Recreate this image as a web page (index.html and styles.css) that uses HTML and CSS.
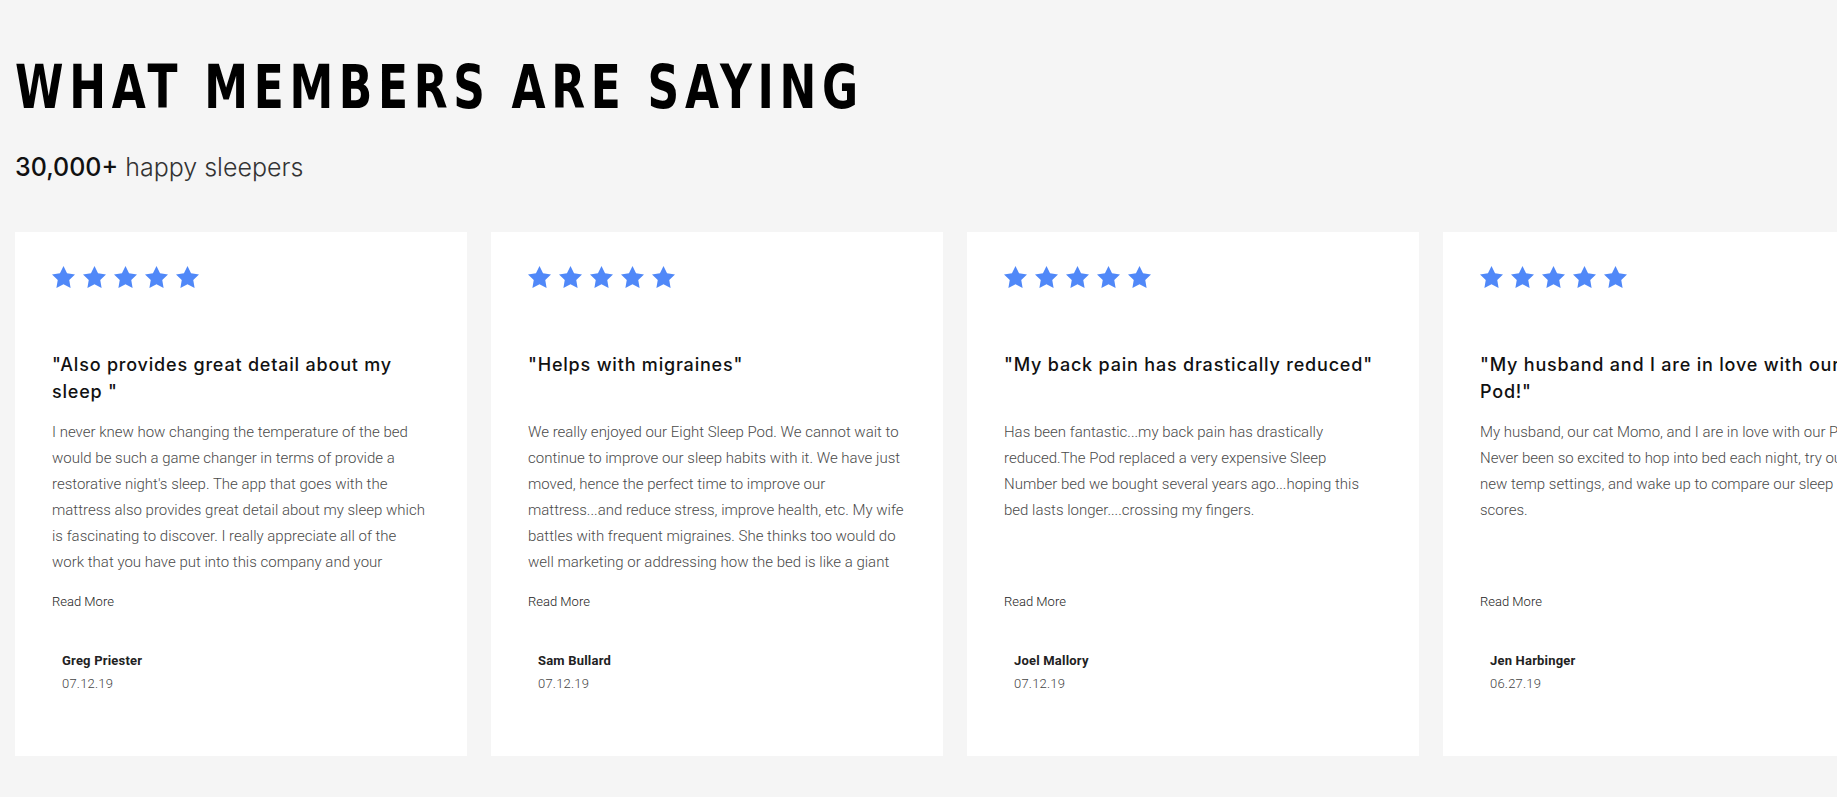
FILE: index.html
```html
<!DOCTYPE html>
<html lang="en">
<head>
<meta charset="utf-8">
<title>What members are saying</title>
<link rel="stylesheet" href="styles.css">
</head>
<body>
<section class="reviews">
  <h1 class="reviews-title">WHAT MEMBERS ARE SAYING</h1>
  <p class="reviews-sub"><strong>30,000+</strong> happy sleepers</p>
  <div class="cards">
    <article class="card">
      <div class="stars" aria-label="5 stars">
        <svg viewBox="2 1.5 20 19.02"><path d="M12 1.5l3.09 6.26 6.91 1.01-5 4.87 1.18 6.88L12 17.27l-6.18 3.25L7 13.64 2 8.77l6.91-1.01z"/></svg>
        <svg viewBox="2 1.5 20 19.02"><path d="M12 1.5l3.09 6.26 6.91 1.01-5 4.87 1.18 6.88L12 17.27l-6.18 3.25L7 13.64 2 8.77l6.91-1.01z"/></svg>
        <svg viewBox="2 1.5 20 19.02"><path d="M12 1.5l3.09 6.26 6.91 1.01-5 4.87 1.18 6.88L12 17.27l-6.18 3.25L7 13.64 2 8.77l6.91-1.01z"/></svg>
        <svg viewBox="2 1.5 20 19.02"><path d="M12 1.5l3.09 6.26 6.91 1.01-5 4.87 1.18 6.88L12 17.27l-6.18 3.25L7 13.64 2 8.77l6.91-1.01z"/></svg>
        <svg viewBox="2 1.5 20 19.02"><path d="M12 1.5l3.09 6.26 6.91 1.01-5 4.87 1.18 6.88L12 17.27l-6.18 3.25L7 13.64 2 8.77l6.91-1.01z"/></svg>
      </div>
      <h2 class="card-title">"Also provides great detail about my sleep "</h2>
      <p class="card-text">I never knew how changing the temperature of the bed would be such a game changer in terms of provide a restorative night's sleep. The app that goes with the mattress also provides great detail about my sleep which is fascinating to discover. I really appreciate all of the work that you have put into this company and your product.</p>
      <a class="read-more" href="#">Read More</a>
      <div class="author">
        <div class="author-name">Greg Priester</div>
        <div class="author-date">07.12.19</div>
      </div>
    </article>
    <article class="card">
      <div class="stars" aria-label="5 stars">
        <svg viewBox="2 1.5 20 19.02"><path d="M12 1.5l3.09 6.26 6.91 1.01-5 4.87 1.18 6.88L12 17.27l-6.18 3.25L7 13.64 2 8.77l6.91-1.01z"/></svg>
        <svg viewBox="2 1.5 20 19.02"><path d="M12 1.5l3.09 6.26 6.91 1.01-5 4.87 1.18 6.88L12 17.27l-6.18 3.25L7 13.64 2 8.77l6.91-1.01z"/></svg>
        <svg viewBox="2 1.5 20 19.02"><path d="M12 1.5l3.09 6.26 6.91 1.01-5 4.87 1.18 6.88L12 17.27l-6.18 3.25L7 13.64 2 8.77l6.91-1.01z"/></svg>
        <svg viewBox="2 1.5 20 19.02"><path d="M12 1.5l3.09 6.26 6.91 1.01-5 4.87 1.18 6.88L12 17.27l-6.18 3.25L7 13.64 2 8.77l6.91-1.01z"/></svg>
        <svg viewBox="2 1.5 20 19.02"><path d="M12 1.5l3.09 6.26 6.91 1.01-5 4.87 1.18 6.88L12 17.27l-6.18 3.25L7 13.64 2 8.77l6.91-1.01z"/></svg>
      </div>
      <h2 class="card-title">"Helps with migraines"</h2>
      <p class="card-text">We really enjoyed our Eight Sleep Pod. We cannot wait to continue to improve our sleep habits with it. We have just moved, hence the perfect time to improve our mattress...and reduce stress, improve health, etc. My wife battles with frequent migraines. She thinks too would do well marketing or addressing how the bed is like a giant heating pad for when she has a headache.</p>
      <a class="read-more" href="#">Read More</a>
      <div class="author">
        <div class="author-name">Sam Bullard</div>
        <div class="author-date">07.12.19</div>
      </div>
    </article>
    <article class="card">
      <div class="stars" aria-label="5 stars">
        <svg viewBox="2 1.5 20 19.02"><path d="M12 1.5l3.09 6.26 6.91 1.01-5 4.87 1.18 6.88L12 17.27l-6.18 3.25L7 13.64 2 8.77l6.91-1.01z"/></svg>
        <svg viewBox="2 1.5 20 19.02"><path d="M12 1.5l3.09 6.26 6.91 1.01-5 4.87 1.18 6.88L12 17.27l-6.18 3.25L7 13.64 2 8.77l6.91-1.01z"/></svg>
        <svg viewBox="2 1.5 20 19.02"><path d="M12 1.5l3.09 6.26 6.91 1.01-5 4.87 1.18 6.88L12 17.27l-6.18 3.25L7 13.64 2 8.77l6.91-1.01z"/></svg>
        <svg viewBox="2 1.5 20 19.02"><path d="M12 1.5l3.09 6.26 6.91 1.01-5 4.87 1.18 6.88L12 17.27l-6.18 3.25L7 13.64 2 8.77l6.91-1.01z"/></svg>
        <svg viewBox="2 1.5 20 19.02"><path d="M12 1.5l3.09 6.26 6.91 1.01-5 4.87 1.18 6.88L12 17.27l-6.18 3.25L7 13.64 2 8.77l6.91-1.01z"/></svg>
      </div>
      <h2 class="card-title">"My back pain has drastically reduced"</h2>
      <p class="card-text">Has been fantastic...my back pain has drastically reduced.The Pod replaced a very expensive Sleep Number bed we bought several years ago...hoping this bed lasts longer....crossing my fingers.</p>
      <a class="read-more" href="#">Read More</a>
      <div class="author">
        <div class="author-name">Joel Mallory</div>
        <div class="author-date">07.12.19</div>
      </div>
    </article>
    <article class="card">
      <div class="stars" aria-label="5 stars">
        <svg viewBox="2 1.5 20 19.02"><path d="M12 1.5l3.09 6.26 6.91 1.01-5 4.87 1.18 6.88L12 17.27l-6.18 3.25L7 13.64 2 8.77l6.91-1.01z"/></svg>
        <svg viewBox="2 1.5 20 19.02"><path d="M12 1.5l3.09 6.26 6.91 1.01-5 4.87 1.18 6.88L12 17.27l-6.18 3.25L7 13.64 2 8.77l6.91-1.01z"/></svg>
        <svg viewBox="2 1.5 20 19.02"><path d="M12 1.5l3.09 6.26 6.91 1.01-5 4.87 1.18 6.88L12 17.27l-6.18 3.25L7 13.64 2 8.77l6.91-1.01z"/></svg>
        <svg viewBox="2 1.5 20 19.02"><path d="M12 1.5l3.09 6.26 6.91 1.01-5 4.87 1.18 6.88L12 17.27l-6.18 3.25L7 13.64 2 8.77l6.91-1.01z"/></svg>
        <svg viewBox="2 1.5 20 19.02"><path d="M12 1.5l3.09 6.26 6.91 1.01-5 4.87 1.18 6.88L12 17.27l-6.18 3.25L7 13.64 2 8.77l6.91-1.01z"/></svg>
      </div>
      <h2 class="card-title">"My husband and I are in love with our Pod!"</h2>
      <p class="card-text">My husband, our cat Momo, and I are in love with our Pod! Never been so excited to hop into bed each night, try out new temp settings, and wake up to compare our sleep scores.</p>
      <a class="read-more" href="#">Read More</a>
      <div class="author">
        <div class="author-name">Jen Harbinger</div>
        <div class="author-date">06.27.19</div>
      </div>
    </article>
  </div>
</section>
</body>
</html>
```

FILE: styles.css
```css
html, body {
  margin: 0;
  padding: 0;
  background: #f5f5f5;
}

body {
  overflow: hidden;
  font-family: Roboto, "Liberation Sans", sans-serif;
  color: #111;
}

.reviews {
  padding: 57px 0 0 15px;
}

.reviews-title {
  margin: 0;
  font-family: "DejaVu Sans Condensed", "DejaVu Sans", sans-serif;
  font-stretch: condensed;
  font-weight: 700;
  font-size: 60px;
  line-height: 60px;
  letter-spacing: 7px;
  color: #000;
  white-space: nowrap;
  transform: scaleX(0.814);
  transform-origin: 0 50%;
}

.reviews-sub {
  margin: 35px 0 0;
  font-family: Inter, Roboto, sans-serif;
  font-size: 25px;
  line-height: 30px;
  font-weight: 300;
  color: #333;
}

.reviews-sub strong {
  font-weight: 500;
  color: #111;
}

.cards {
  display: flex;
  gap: 24px;
  margin-top: 50px;
}

.card {
  flex: 0 0 452px;
  width: 452px;
  min-width: 0;
  box-sizing: border-box;
  background: #fff;
  padding: 34px 25px 63px 37px;
  display: flex;
  flex-direction: column;
  align-items: flex-start;
}

.stars {
  display: flex;
  gap: 8px;
}

.stars svg {
  width: 23px;
  height: 22px;
  fill: #5088f8;
}

.card-title {
  margin: 63px 0 0;
  width: 380px;
  height: 54px;
  font-family: Inter, "Noto Sans", sans-serif;
  font-weight: 500;
  font-size: 18px;
  line-height: 27px;
  letter-spacing: 0.8px;
  color: #111;
}

.card-text {
  margin: 14px 0 0;
  width: 379px;
  height: 156px;
  overflow: hidden;
  font-size: 15px;
  line-height: 26px;
  font-weight: 300;
  color: #4a4a4a;
}

.read-more {
  margin-top: 18px;
  font-size: 13px;
  line-height: 18px;
  font-weight: 300;
  color: #222;
  text-decoration: none;
}

.author {
  margin-top: 41px;
  padding-left: 10px;
}

.author-name {
  font-size: 13px;
  line-height: 18px;
  font-weight: 700;
  color: #222;
  letter-spacing: 0.2px;
}

.author-date {
  margin-top: 5px;
  font-size: 13px;
  line-height: 18px;
  font-weight: 300;
  color: #444;
  letter-spacing: 0.2px;
}
```
